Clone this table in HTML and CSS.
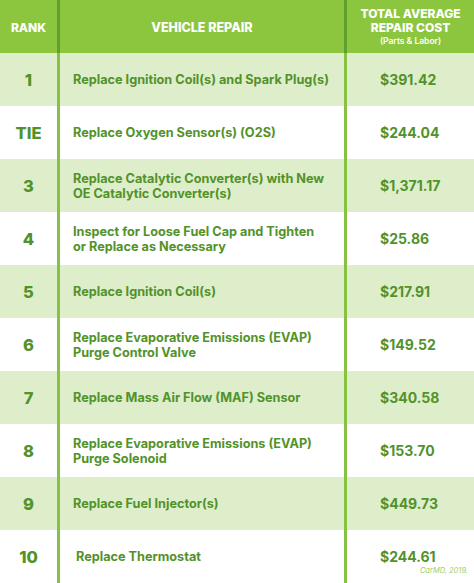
FILE: index.html
```html
<!DOCTYPE html>
<html>
<head>
<meta charset="utf-8">
<link rel="stylesheet" href="styles.css">
</head>
<body>
<div class="table">
  <div class="row head">
    <div class="cell rank">RANK</div>
    <div class="cell repair center">VEHICLE REPAIR</div>
    <div class="cell cost center">
      <div class="h1">TOTAL AVERAGE</div>
      <div class="h1">REPAIR COST</div>
      <div class="h2">(Parts &amp; Labor)</div>
    </div>
  </div>
  <div class="row alt">
    <div class="cell rank">1</div>
    <div class="cell repair">Replace Ignition Coil(s) and Spark Plug(s)</div>
    <div class="cell cost">$391.42</div>
  </div>
  <div class="row">
    <div class="cell rank">TIE</div>
    <div class="cell repair">Replace Oxygen Sensor(s) (O2S)</div>
    <div class="cell cost">$244.04</div>
  </div>
  <div class="row alt">
    <div class="cell rank">3</div>
    <div class="cell repair">Replace Catalytic Converter(s) with New<br>OE Catalytic Converter(s)</div>
    <div class="cell cost">$1,371.17</div>
  </div>
  <div class="row">
    <div class="cell rank">4</div>
    <div class="cell repair">Inspect for Loose Fuel Cap and Tighten<br>or Replace as Necessary</div>
    <div class="cell cost">$25.86</div>
  </div>
  <div class="row alt">
    <div class="cell rank">5</div>
    <div class="cell repair">Replace Ignition Coil(s)</div>
    <div class="cell cost">$217.91</div>
  </div>
  <div class="row">
    <div class="cell rank">6</div>
    <div class="cell repair">Replace Evaporative Emissions (EVAP)<br>Purge Control Valve</div>
    <div class="cell cost">$149.52</div>
  </div>
  <div class="row alt">
    <div class="cell rank">7</div>
    <div class="cell repair">Replace Mass Air Flow (MAF) Sensor</div>
    <div class="cell cost">$340.58</div>
  </div>
  <div class="row">
    <div class="cell rank">8</div>
    <div class="cell repair">Replace Evaporative Emissions (EVAP)<br>Purge Solenoid</div>
    <div class="cell cost">$153.70</div>
  </div>
  <div class="row alt">
    <div class="cell rank">9</div>
    <div class="cell repair">Replace Fuel Injector(s)</div>
    <div class="cell cost">$449.73</div>
  </div>
  <div class="row last">
    <div class="cell rank">10</div>
    <div class="cell repair indent">Replace Thermostat</div>
    <div class="cell cost">$244.61<span class="credit">CarMD, 2019.</span></div>
  </div>
</div>
</body>
</html>
```
FILE: styles.css
```css
* { box-sizing: border-box; }
html, body { margin: 0; padding: 0; background: #fff; }
body { font-family: Inter, "Liberation Sans", sans-serif; color: #52922a; }
.table { width: 474px; height: 583px; display: flex; flex-direction: column; overflow: hidden; }
.row { display: grid; grid-template-columns: 60px 287px 127px; height: 53px; flex: none; background: #fff; }
.row.alt { background: #deeecb; }
.cell { display: flex; align-items: center; border-right: 3px solid #87c142; font-weight: 700; }
.cell.cost { border-right: none; }
.rank { justify-content: center; font-size: 16.5px; font-weight: 800; }
.repair { padding-left: 13px; font-size: 12.7px; line-height: 15px; }
.repair.indent { padding-left: 16px; }
.cost { padding-left: 33px; font-size: 14px; position: relative; }
.head { background: #8cc63f; color: #fff; }
.head .cell { border-right-color: #5fa12c; }
.head .cell.cost { border-right: none; }
.head .rank { font-size: 12px; font-weight: 800; padding-top: 2px; }
.head .center { justify-content: center; padding-left: 0; font-size: 12.5px; font-weight: 800; padding-top: 2px; }
.head .cost { flex-direction: column; justify-content: center; text-align: center; padding-top: 0; }
.h1 { font-size: 12px; line-height: 14.5px; font-weight: 800; }
.h2 { font-size: 8.5px; line-height: 11px; font-weight: 600; }
.credit { position: absolute; right: 6px; bottom: 8px; font-size: 7.5px; font-style: italic; font-weight: 400; color: #9ccf6a; }
```
